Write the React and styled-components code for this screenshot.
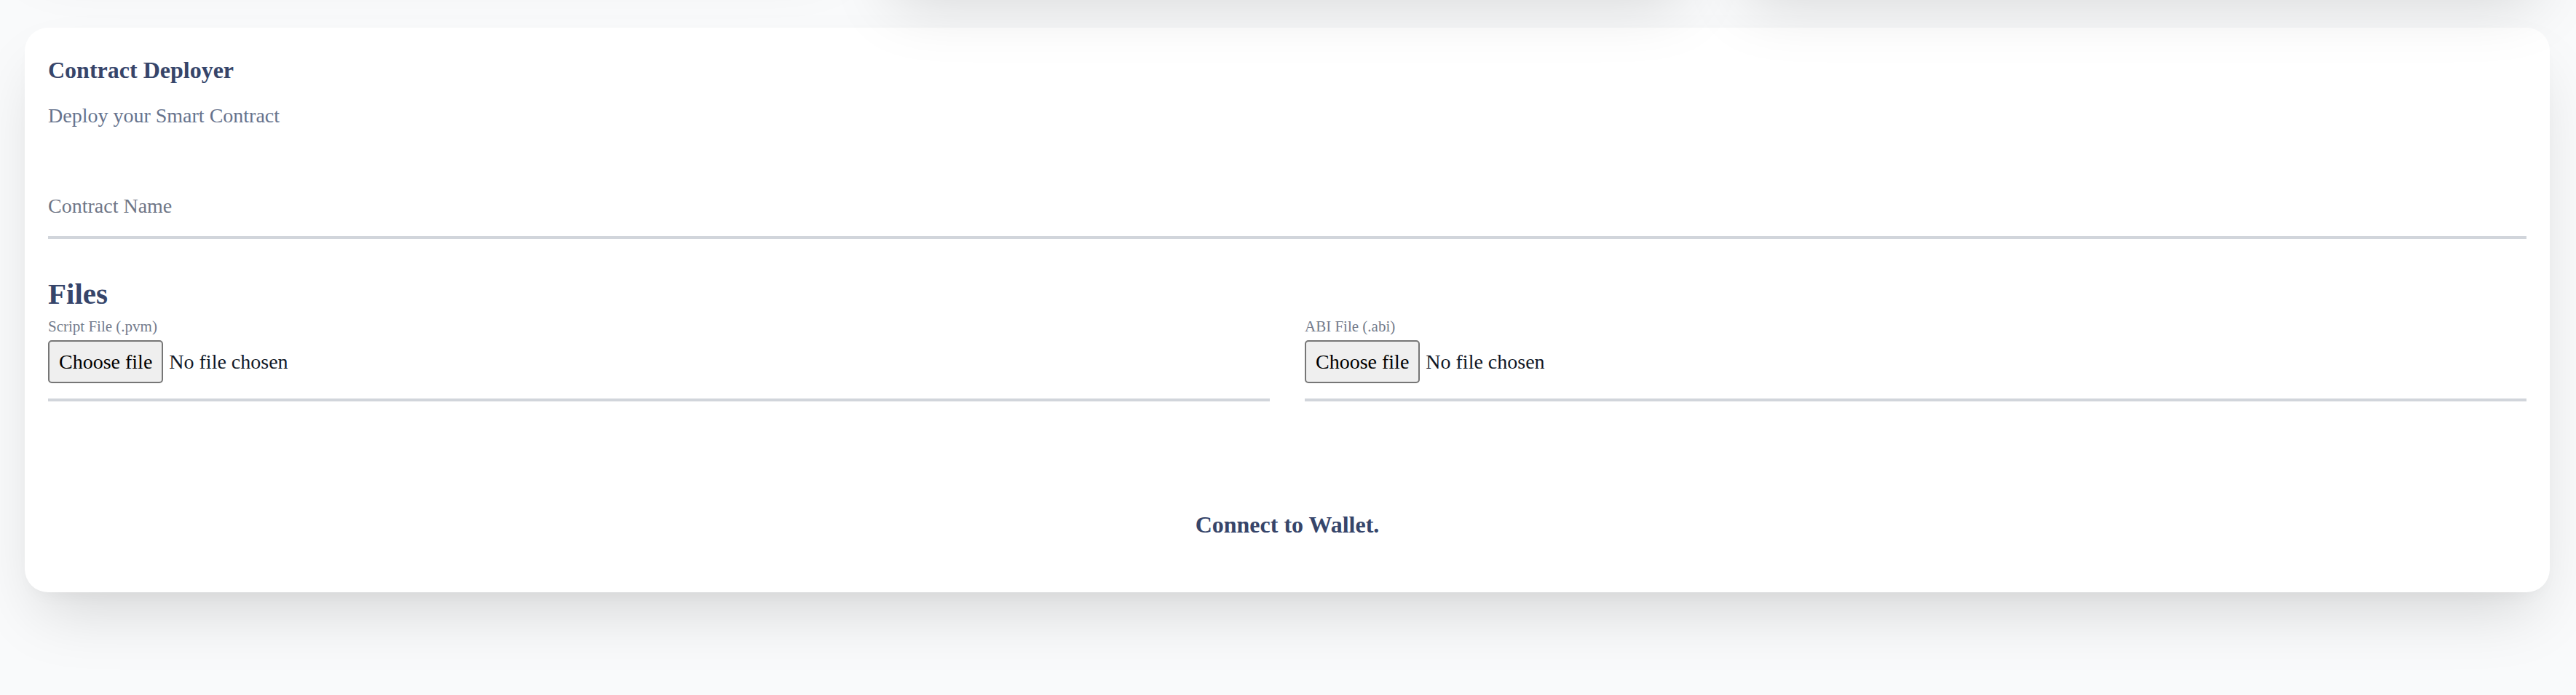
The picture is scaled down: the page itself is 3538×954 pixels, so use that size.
import styled, { createGlobalStyle } from 'styled-components'

const GlobalStyle = createGlobalStyle`
  body {
    margin: 0;
    background: #f9fafb;
    font-family: 'Liberation Serif', 'Times New Roman', serif;
  }
`

const cardShadow = `0 44px 88px -21px rgba(0, 0, 0, 0.15), 0 12px 24px -12px rgba(0, 0, 0, 0.05)`

const Page = styled.div`
  display: flow-root;
  box-sizing: border-box;
  min-height: 100vh;
  padding: 0 36px 140px 34px;
`

const TopRow = styled.div`
  display: grid;
  grid-template-columns: repeat(3, 1fr);
  gap: 48px;
  align-items: start;
  margin: -200px 0 58px;
`

const TopTile = styled.div`
  height: ${(props) => (props.$tall ? '180px' : '120px')};
  background: #fff;
  border-radius: 32px;
  box-shadow: ${cardShadow};
`

const Card = styled.section`
  background: #fff;
  border-radius: 32px;
  padding: 32px;
  box-shadow: ${cardShadow};
`

const Title = styled.h2`
  margin: 0;
  font-size: 32px;
  line-height: 52px;
  font-weight: 700;
  color: #36456a;
`

const Subtitle = styled.p`
  margin: 16px 0 0;
  font-size: 28px;
  line-height: 42px;
  color: #66738d;
`

const Form = styled.form`
  margin-top: 62px;
`

const TextInput = styled.input`
  display: block;
  box-sizing: border-box;
  width: 100%;
  height: 86px;
  padding: 0;
  border: 0;
  border-bottom: 4px solid #d1d5db;
  background: transparent;
  font-family: inherit;
  font-size: 28px;
  color: #111827;
  outline: none;

  &::placeholder {
    color: #6f7686;
  }
`

const SectionTitle = styled.h3`
  margin: 49px 0 0;
  font-size: 41px;
  line-height: 52px;
  font-weight: 700;
  color: #36456a;
`

const FileGrid = styled.div`
  display: grid;
  grid-template-columns: 1fr 1fr;
  column-gap: 48px;
  margin-top: 6px;
`

const FileField = styled.label`
  display: flex;
  flex-direction: column;
  align-items: flex-start;
  gap: 6px;
  padding-bottom: 21px;
  border-bottom: 4px solid #d1d5db;
  cursor: pointer;
`

const FieldLabel = styled.span`
  font-size: 21px;
  line-height: 26px;
  color: #737b8c;
`

const HiddenInput = styled.input`
  display: none;
`

const FilePicker = styled.span`
  display: flex;
  align-items: center;
  gap: 8px;
  font-size: 28px;
  line-height: 31px;
  color: #111827;
`

const PickButton = styled.span`
  padding: 12px 13px;
  border: 2px solid #767676;
  border-radius: 5px;
  background: #efefef;
  color: #000;
`

const WalletPrompt = styled.p`
  margin: 145px 0 37px;
  text-align: center;
  font-size: 32px;
  line-height: 48px;
  font-weight: 700;
  color: #36456a;
`

function FileUpload({ label, accept }) {
  return (
    <FileField>
      <FieldLabel>{label}</FieldLabel>
      <HiddenInput type="file" accept={accept} />
      <FilePicker>
        <PickButton>Choose file</PickButton>
        No file chosen
      </FilePicker>
    </FileField>
  )
}

function App() {
  return (
    <>
      <GlobalStyle />
      <Page>
        <TopRow>
          <TopTile />
          <TopTile $tall />
          <TopTile $tall />
        </TopRow>

        <Card>
          <Title>Contract Deployer</Title>
          <Subtitle>Deploy your Smart Contract</Subtitle>

          <Form onSubmit={(e) => e.preventDefault()}>
            <TextInput type="text" placeholder="Contract Name" />

            <SectionTitle>Files</SectionTitle>
            <FileGrid>
              <FileUpload label="Script File (.pvm)" accept=".pvm" />
              <FileUpload label="ABI File (.abi)" accept=".abi" />
            </FileGrid>
          </Form>

          <WalletPrompt>Connect to Wallet.</WalletPrompt>
        </Card>
      </Page>
    </>
  )
}

export default App
